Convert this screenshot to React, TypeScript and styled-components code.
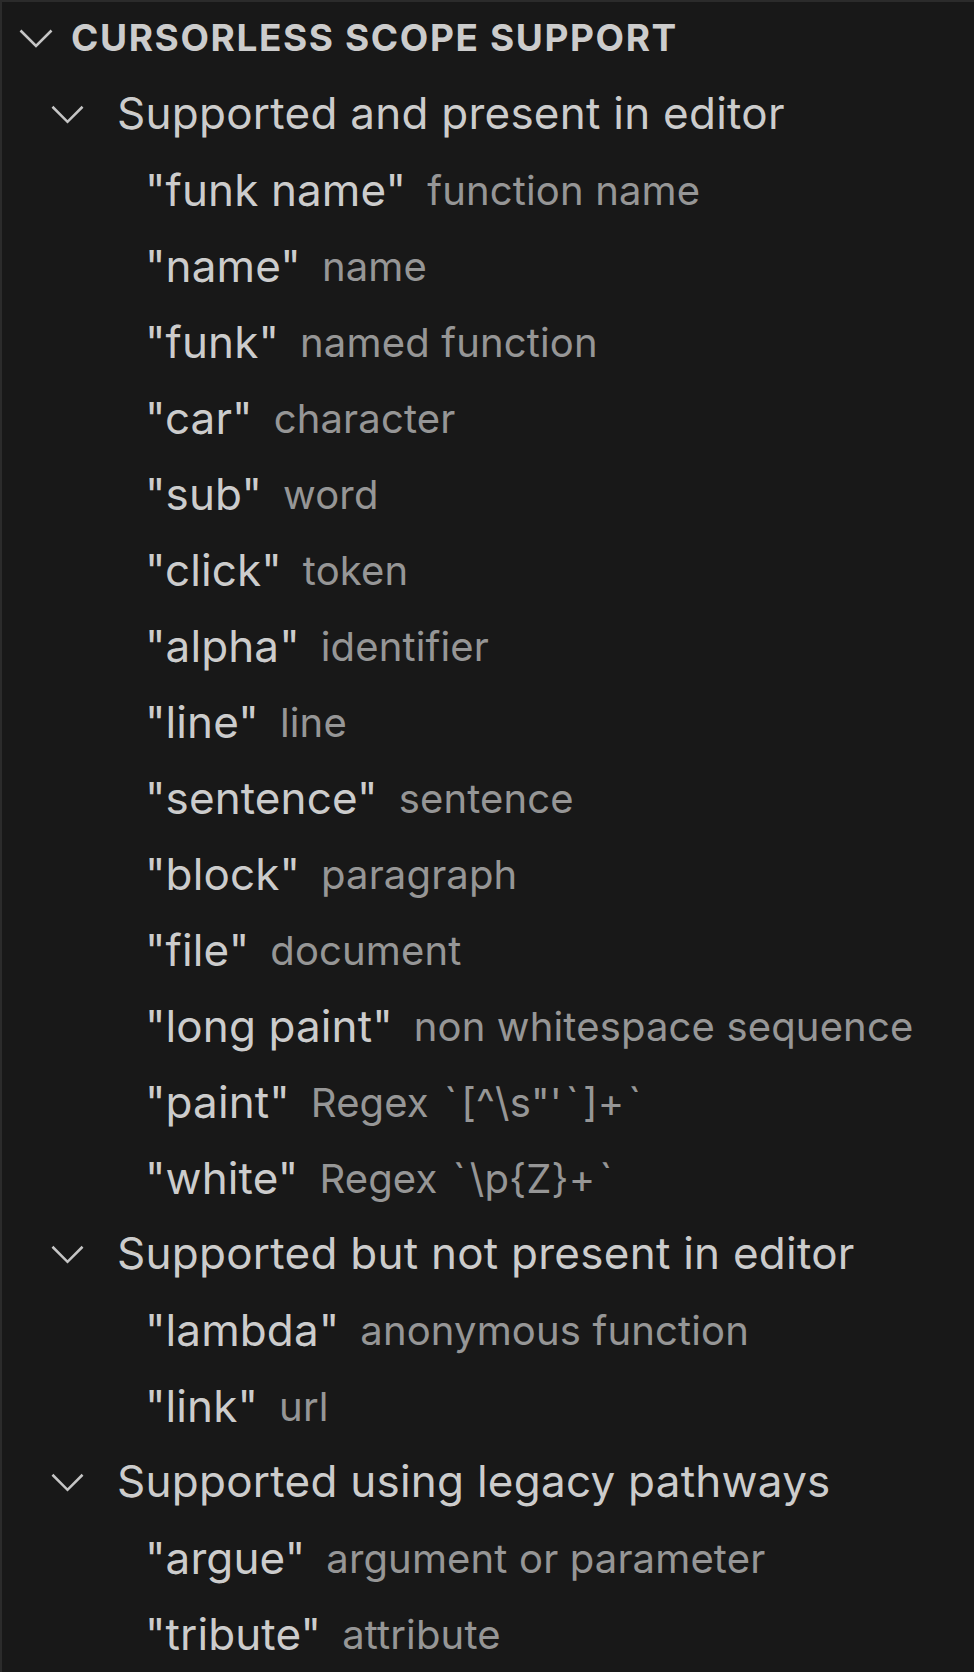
import React from "react";
import styled, { createGlobalStyle } from "styled-components";

const GlobalStyle = createGlobalStyle`
    html, body {
        margin: 0;
        padding: 0;
        background: #181818;
    }
    body {
        font-family: Inter, "Noto Sans", "Liberation Sans", sans-serif;
        -webkit-font-smoothing: antialiased;
    }
`;

type Leaf = { spoken: string; desc: string };
type Group = { title: string; items: Leaf[] };

const groups: Group[] = [
    {
        title: "Supported and present in editor",
        items: [
            { spoken: "funk name", desc: "function name" },
            { spoken: "name", desc: "name" },
            { spoken: "funk", desc: "named function" },
            { spoken: "car", desc: "character" },
            { spoken: "sub", desc: "word" },
            { spoken: "click", desc: "token" },
            { spoken: "alpha", desc: "identifier" },
            { spoken: "line", desc: "line" },
            { spoken: "sentence", desc: "sentence" },
            { spoken: "block", desc: "paragraph" },
            { spoken: "file", desc: "document" },
            { spoken: "long paint", desc: "non whitespace sequence" },
            { spoken: "paint", desc: "Regex `[^\\s\"'`]+`" },
            { spoken: "white", desc: "Regex `\\p{Z}+`" },
        ],
    },
    {
        title: "Supported but not present in editor",
        items: [
            { spoken: "lambda", desc: "anonymous function" },
            { spoken: "link", desc: "url" },
        ],
    },
    {
        title: "Supported using legacy pathways",
        items: [
            { spoken: "argue", desc: "argument or parameter" },
            { spoken: "tribute", desc: "attribute" },
        ],
    },
];

const Chevron = ({ size = 34 }: { size?: number }) => (
    <svg width={size} height={19} viewBox="0 0 34 19" fill="none">
        <polyline
            points="1.5,1.5 17,17 32.5,1.5"
            stroke="#c5c5c5"
            strokeWidth="2.6"
            strokeLinejoin="miter"
        />
    </svg>
);

// backticks in SF are wider set than in Inter
const spaceTicks = (text: string) =>
    text.split("`").map((part, i, all) => (
        <React.Fragment key={i}>
            {part}
            {i < all.length - 1 && <Tick>`</Tick>}
        </React.Fragment>
    ));

const App = () => {
    return (
        <>
            <GlobalStyle />
            <Pane>
                <HeaderRow>
                    <Twistie $gap={18}>
                        <Chevron />
                    </Twistie>
                    <HeaderTitle>Cursorless scope support</HeaderTitle>
                </HeaderRow>
                {groups.map(group => (
                    <React.Fragment key={group.title}>
                        <GroupRow>
                            <Twistie $gap={33}>
                                <Chevron size={33} />
                            </Twistie>
                            <GroupLabel>{group.title}</GroupLabel>
                        </GroupRow>
                        {group.items.map(item => (
                            <LeafRow key={item.spoken}>
                                <Label>"{item.spoken}"</Label>
                                <Description>{spaceTicks(item.desc)}</Description>
                            </LeafRow>
                        ))}
                    </React.Fragment>
                ))}
            </Pane>
        </>
    );
};

const Pane = styled.div`
    box-sizing: border-box;
    width: 974px;
    min-height: 1672px;
    background: #181818;
    border-left: 2px solid #2b2b2b;
    border-top: 2px solid #2b2b2b;
    display: flex;
    flex-direction: column;
    overflow: hidden;
`;

const Row = styled.div`
    height: 76px;
    display: flex;
    align-items: center;
    white-space: pre;
    color: #cccccc;
`;

const HeaderRow = styled(Row)`
    box-sizing: border-box;
    height: 74px;
    padding-left: 17px;
    padding-bottom: 4px;
`;

const GroupRow = styled(Row)`
    box-sizing: border-box;
    padding-left: 49px;
    padding-bottom: 2px;
`;

const LeafRow = styled(Row)`
    padding-left: 143px;
`;

const Twistie = styled.div<{ $gap: number }>`
    display: flex;
    align-items: center;
    margin-right: ${props => props.$gap}px;
    padding-top: 2px;
`;

const HeaderTitle = styled.div`
    font-size: 37px;
    font-weight: 700;
    text-transform: uppercase;
    letter-spacing: 1.6px;
`;

const GroupLabel = styled.div`
    font-size: 44px;
    letter-spacing: 0.25px;
`;

const Label = styled.span`
    font-size: 44px;
    letter-spacing: 0.1px;
`;

const Description = styled.span`
    font-size: 40px;
    letter-spacing: 0.15px;
    margin-left: 21px;
    color: #cccccc;
    opacity: 0.7;
`;

const Tick = styled.span`
    margin: 0 4px;
`;

export default App;
